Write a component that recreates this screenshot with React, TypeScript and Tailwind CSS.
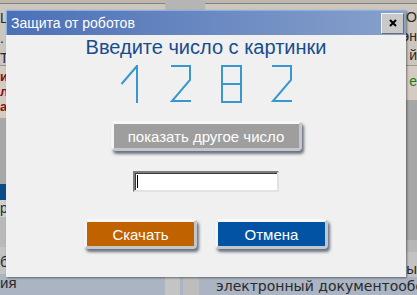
import React from 'react';

const font = { fontFamily: '"Liberation Sans", Arial, sans-serif' };

const Digits: React.FC = () => (
  <svg width="400" height="50" viewBox="0 0 400 50" className="block">
    <g fill="none" stroke="#3797cf" strokeWidth="2" strokeLinejoin="miter">
      {/* 1 */}
      <path d="M115.5 25 L131 7 M131 6 V44" />
      {/* 2 */}
      <path d="M165 7 H184 V21 L166 42 H185" />
      {/* 8 */}
      <path d="M216 7 H235 V43 H216 Z M216 25 H235" />
      {/* 2 */}
      <path d="M266 7 H285 V21 L267 42 H286" />
    </g>
  </svg>
);

const BevelButton: React.FC<{ label: string; bg: string; width: string }> = ({ label, bg, width }) => (
  <button
    className={`${width} h-[30px] ${bg} border-[3px] border-t-[#f7f7f7] border-l-[#f4f4f4] border-r-[#c3c6cc] border-b-[#c3c6cc] rounded-[4px] shadow-[2px_3px_3px_rgba(50,60,80,0.7)] text-white text-[15px] leading-none flex items-center justify-center`}
    style={font}
  >
    {label}
  </button>
);

export default function App() {
  return (
    <div className="relative w-[417px] h-[295px] overflow-hidden bg-[#c4beb6]" style={font}>
      {/* page behind the modal */}
      <div className="flex h-full">
        <div className="w-[165px] shrink-0 flex flex-col text-[14px] text-[#2a2a2a] overflow-hidden">
          <div className="h-[4px] bg-[#bdb7af] border-b border-[#85817c]" />
          <div className="h-[62px] bg-[#cbc6be] border-b border-[#9a958f] pt-[4px] leading-[20px]">
            <div>L</div>
            <div>.</div>
            <div>Т</div>
          </div>
          <div className="h-[52px] bg-[#d4ccc2] pt-[3px] leading-[15px] font-bold text-[#8e0c0c] text-[13px]">
            <div>и</div>
            <div>л</div>
            <div>а:</div>
          </div>
          <div className="h-[66px] bg-[#a8a8a8]" />
          <div className="h-[16px] bg-[#0f4b86]" />
          <div className="h-[17px] bg-[#cfcfcf] leading-[17px]">р</div>
          <div className="h-[30px] bg-[#b9b9b9]" />
          <div className="h-[27px] bg-[#c3c3c3] pt-[6px] leading-[18px] text-[15px]">б</div>
          <div className="flex-1 bg-[#aab4c3] leading-[18px] text-[15px]">ия</div>
        </div>
        <div className="w-[40px] shrink-0 flex flex-col">
          <div className="h-[277px] bg-[#b5b5b5]" />
          <div className="flex-1 flex gap-[3px] bg-[#aab4c3]">
            <div className="w-[15px] bg-[#c4c4c4]" />
            <div className="w-[16px] bg-[#bdbdbd]" />
          </div>
        </div>
        <div className="flex-1 min-w-0 overflow-hidden flex flex-col text-[14px] text-[#2a2a2a]">
          <div className="h-[4px] bg-[#bdb7af] border-b border-[#85817c]" />
          <div className="h-[62px] bg-[#cbc6be] border-b border-[#9a958f] pt-[4px] leading-[19px] text-right whitespace-nowrap">
            <div>Описание О</div>
            <div>Программа эн</div>
            <div>Пакет й</div>
          </div>
          <div className="h-[34px] bg-[#d4ccc2] pt-[6px] leading-[18px] text-right text-[#1f7a1f]">е</div>
          <div className="h-[140px] bg-[#a6a6a6]" />
          <div className="h-[12px] bg-[#b7b7b7]" />
          <div className="h-[25px] bg-[#c3c3c3] pt-[8px] leading-[18px] text-[15px] text-right whitespace-nowrap">вы</div>
          <div className="flex-1 bg-[#aab4c3] pl-[11px] leading-[18px] text-[14px] whitespace-nowrap" style={{ fontFamily: '"DejaVu Sans", Verdana, sans-serif' }}>
            электронный документообо
          </div>
        </div>
      </div>

      {/* modal */}
      <div className="absolute left-[6px] top-[10px] w-[400px] h-[267px] flex flex-col bg-[#f0f0f0] shadow-[1px_1px_2px_rgba(0,0,0,0.45)]">
        <div className="h-[25px] flex items-center justify-between bg-gradient-to-r from-[#4c70b6] to-[#88a1cc] border-t border-l border-[#8cb0ea]">
          <span className="pl-[4px] text-white text-[14px]">Защита от роботов</span>
          <div className="mr-[2px] w-[23px] h-[21px] bg-[#c9c9c9] border border-t-[#f2f2f2] border-l-[#f2f2f2] border-r-[#6e6e6e] border-b-[#6e6e6e] flex items-center justify-center">
            <svg width="8" height="8" viewBox="0 0 8 8">
              <path d="M1 1 L7 7 M7 1 L1 7" stroke="#000" strokeWidth="2" />
            </svg>
          </div>
        </div>
        <div className="flex flex-col items-center">
          <div className="text-[20px] leading-[24px] text-[#174d8f]">Введите число с картинки</div>
          <Digits />
          <div className="mt-[12px]">
            <BevelButton label="показать другое число" bg="bg-[#9e9e9e]" width="w-[191px]" />
          </div>
          <div className="mt-[20px] w-[146px] h-[21px] bg-white border-2 border-t-[#7c7c7c] border-l-[#7c7c7c] border-r-[#e2e2e2] border-b-[#e2e2e2] shadow-[inset_1px_1px_0_#3a3a3a] pl-[2px] pt-[2px]">
            <div className="w-[1px] h-[13px] bg-black" />
          </div>
          <div className="mt-[27px] flex gap-[18px]">
            <BevelButton label="Скачать" bg="bg-[#c06200]" width="w-[113px]" />
            <BevelButton label="Отмена" bg="bg-[#0353a4]" width="w-[113px]" />
          </div>
        </div>
      </div>
    </div>
  );
}
